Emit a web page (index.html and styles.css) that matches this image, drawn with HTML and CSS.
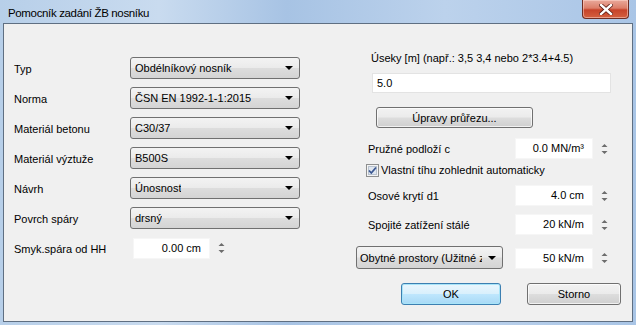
FILE: index.html
```html
<!DOCTYPE html>
<html lang="cs">
<head>
    <meta charset="UTF-8">
    <title>Pomocník zadání ŽB nosníku</title>
    <link rel="stylesheet" href="styles.css">
</head>
<body>
    <div class="window">
        <div class="titlebar">
            <span class="title">Pomocník zadání ŽB nosníku</span>
            <div class="close-btn">
                <svg width="14" height="11" viewBox="0 0 14 11">
                    <path d="M2 1 L12 10 M12 1 L2 10" stroke="#5a1a10" stroke-width="4" stroke-linecap="square"/>
                    <path d="M2 1 L12 10 M12 1 L2 10" stroke="#fff" stroke-width="2.4" stroke-linecap="square"/>
                </svg>
            </div>
        </div>
        <div class="client">
            <!-- left column -->
            <div class="left-col">
                <span class="lbl">Typ</span>
                <div class="combo"><span class="combo-text">Obdélníkový nosník</span><span class="arrow"></span></div>
                <span class="lbl">Norma</span>
                <div class="combo"><span class="combo-text">ČSN EN 1992-1-1:2015</span><span class="arrow"></span></div>
                <span class="lbl">Materiál betonu</span>
                <div class="combo"><span class="combo-text">C30/37</span><span class="arrow"></span></div>
                <span class="lbl">Materiál výztuže</span>
                <div class="combo"><span class="combo-text">B500S</span><span class="arrow"></span></div>
                <span class="lbl">Návrh</span>
                <div class="combo"><span class="combo-text">Únosnost</span><span class="arrow"></span></div>
                <span class="lbl">Povrch spáry</span>
                <div class="combo"><span class="combo-text">drsný</span><span class="arrow"></span></div>
                <span class="lbl">Smyk.spára od HH</span>
                <div class="spin-wrap small">
                    <div class="num">0.00 cm</div>
                    <svg class="spin" width="7" height="14" viewBox="0 0 7 14"><path d="M0.5 5 L3.5 2 L6.5 5 Z M0.5 9 L3.5 12 L6.5 9 Z" fill="#6d6d6d"/></svg>
                </div>
            </div>

            <!-- right column -->
            <div class="right-col">
                <div class="useky-lbl">Úseky [m] (např.: 3,5 3,4 nebo 2*3.4+4.5)</div>
                <div class="text-input">5.0</div>
                <div class="btn btn-wide">Úpravy průřezu...</div>

                <div class="row row-first">
                    <span class="rlbl">Pružné podloží c</span>
                    <div class="num">0.0 MN/m³</div>
                    <svg class="spin" width="7" height="14" viewBox="0 0 7 14"><path d="M0.5 5 L3.5 2 L6.5 5 Z M0.5 9 L3.5 12 L6.5 9 Z" fill="#6d6d6d"/></svg>
                </div>
                <div class="check-row">
                    <svg width="13" height="13" viewBox="0 0 13 13">
                        <rect x="0.5" y="0.5" width="12" height="12" fill="#f4f4f4" stroke="#8e8f8f"/>
                        <rect x="2.5" y="2.5" width="8" height="8" fill="#dfe6ef" stroke="#b8c2cf"/>
                        <path d="M3 6.5 L5.3 9 L10 3.5" fill="none" stroke="#3a5691" stroke-width="1.8"/>
                    </svg>
                    <span>Vlastní tíhu zohlednit automaticky</span>
                </div>
                <div class="row">
                    <span class="rlbl">Osové krytí d1</span>
                    <div class="num">4.0 cm</div>
                    <svg class="spin" width="7" height="14" viewBox="0 0 7 14"><path d="M0.5 5 L3.5 2 L6.5 5 Z M0.5 9 L3.5 12 L6.5 9 Z" fill="#6d6d6d"/></svg>
                </div>
                <div class="row row-tight">
                    <span class="rlbl">Spojité zatížení stálé</span>
                    <div class="num">20 kN/m</div>
                    <svg class="spin" width="7" height="14" viewBox="0 0 7 14"><path d="M0.5 5 L3.5 2 L6.5 5 Z M0.5 9 L3.5 12 L6.5 9 Z" fill="#6d6d6d"/></svg>
                </div>
                <div class="row row-combo">
                    <div class="combo combo-load"><span class="combo-text">Obytné prostory (Užitné zat.)</span><span class="arrow"></span></div>
                    <div class="num">50 kN/m</div>
                    <svg class="spin" width="7" height="14" viewBox="0 0 7 14"><path d="M0.5 5 L3.5 2 L6.5 5 Z M0.5 9 L3.5 12 L6.5 9 Z" fill="#6d6d6d"/></svg>
                </div>
                <div class="buttons">
                    <div class="btn btn-ok">OK</div>
                    <div class="btn btn-cancel">Storno</div>
                </div>
            </div>
        </div>
    </div>
</body>
</html>
```

FILE: styles.css
```css
body {
    margin: 0;
    padding: 0;
    font-family: "Liberation Sans", Arial, sans-serif;
    font-size: 11px;
    color: #000;
    background: #a9c4e3;
}

.window {
    width: 636px;
    height: 325px;
    display: flex;
    flex-direction: column;
    background: linear-gradient(90deg, #b7cfe9 0%, #c9dbef 25%, #a7c3e4 45%, #bcd2ec 70%, #a9c5e6 100%);
    box-sizing: border-box;
    padding: 0 3px 3px 3px;
}

.titlebar {
    height: 23px;
    display: flex;
    align-items: center;
    justify-content: space-between;
}

.title {
    font-size: 11.5px;
    letter-spacing: -0.35px;
    padding-left: 5px;
    padding-top: 2px;
    color: #000;
}

.close-btn {
    width: 45px;
    height: 18px;
    margin-right: 4px;
    align-self: flex-start;
    display: flex;
    align-items: center;
    justify-content: center;
    background: linear-gradient(180deg, #e9a99b 0%, #dc7e69 45%, #c7432a 55%, #d4603f 100%);
    border: 1px solid #6f2d23;
    border-top: none;
    border-radius: 0 0 4px 4px;
    box-shadow: inset 0 0 0 1px rgba(255, 220, 210, 0.5);
}

.client {
    flex: 1;
    background: #f0f0f0;
    border: 1px solid #5f6f82;
    display: flex;
}

/* left column */

.left-col {
    width: 296px;
    box-sizing: border-box;
    padding: 33px 0 0 10px;
    display: grid;
    grid-template-columns: 116px 170px;
    grid-auto-rows: 22px;
    row-gap: 8px;
    align-items: center;
    align-content: start;
}

.lbl {
    padding-top: 1px;
}

.combo {
    height: 22px;
    box-sizing: border-box;
    border: 1px solid #707070;
    border-radius: 3px;
    background: linear-gradient(180deg, #f3f3f3 0%, #ebebeb 48%, #dddddd 52%, #d4d4d4 100%);
    display: flex;
    align-items: center;
    padding: 0 20px 0 4px;
    position: relative;
}

.combo-text {
    white-space: nowrap;
    overflow: hidden;
}

.arrow {
    position: absolute;
    right: 6px;
    top: 8px;
    width: 0;
    height: 0;
    border-left: 4px solid transparent;
    border-right: 4px solid transparent;
    border-top: 4px solid #000;
}

.spin-wrap {
    display: flex;
    align-items: center;
}

.spin-wrap.small .num {
    width: 77px;
    margin-left: 3px;
}

.num {
    height: 21px;
    width: 78px;
    box-sizing: border-box;
    background: #fff;
    border: 1px solid #f6f6f6;
    text-align: right;
    padding-right: 8px;
    line-height: 19px;
}

.spin {
    margin-left: 8px;
}

/* right column */

.right-col {
    margin-left: 56px;
    padding-top: 27px;
    display: flex;
    flex-direction: column;
    width: 272px;
}

.useky-lbl {
    height: 14px;
    line-height: 14px;
    padding-left: 15px;
}

.text-input {
    margin: 8px 0 0 16px;
    width: 239px;
    height: 20px;
    box-sizing: border-box;
    background: #fff;
    border: 1px solid #e3e3e3;
    padding-left: 4px;
    line-height: 18px;
}

.btn {
    height: 22px;
    box-sizing: border-box;
    border: 1px solid #707070;
    border-radius: 3px;
    background: linear-gradient(180deg, #f2f2f2 0%, #ebebeb 48%, #dddddd 52%, #cfcfcf 100%);
    box-shadow: inset 0 0 0 1px rgba(255, 255, 255, 0.7);
    display: flex;
    align-items: center;
    justify-content: center;
}

.btn-wide {
    margin: 14px 0 0 20px;
    width: 157px;
    height: 21px;
}

.row {
    display: grid;
    grid-template-columns: 159px 78px auto;
    align-items: center;
    margin-top: 8px;
}

.row-first {
    margin-top: 10px;
}

.row .rlbl {
    padding-left: 12px;
}

.row-combo {
    margin-top: 11px;
}

.combo-load {
    width: 147px;
    height: 23px;
    padding-left: 3px;
}

.combo-load .arrow {
    top: 9px;
}

.row-combo .num {
    margin-top: 2px;
}

.check-row {
    display: flex;
    align-items: center;
    margin: 4px 0 0 10px;
    height: 14px;
}

.check-row span {
    margin-left: 2px;
}

.buttons {
    display: flex;
    margin-top: 14px;
    padding-left: 45px;
}

.btn-ok {
    width: 100px;
    border-color: #3c7fb1;
    box-shadow: inset 0 0 0 1px #a8e4f8;
    background: linear-gradient(180deg, #eaf6fd 0%, #d9f0fc 48%, #bee6fd 52%, #a7d9f5 100%);
}

.btn-cancel {
    width: 94px;
    margin-left: 26px;
}
```
